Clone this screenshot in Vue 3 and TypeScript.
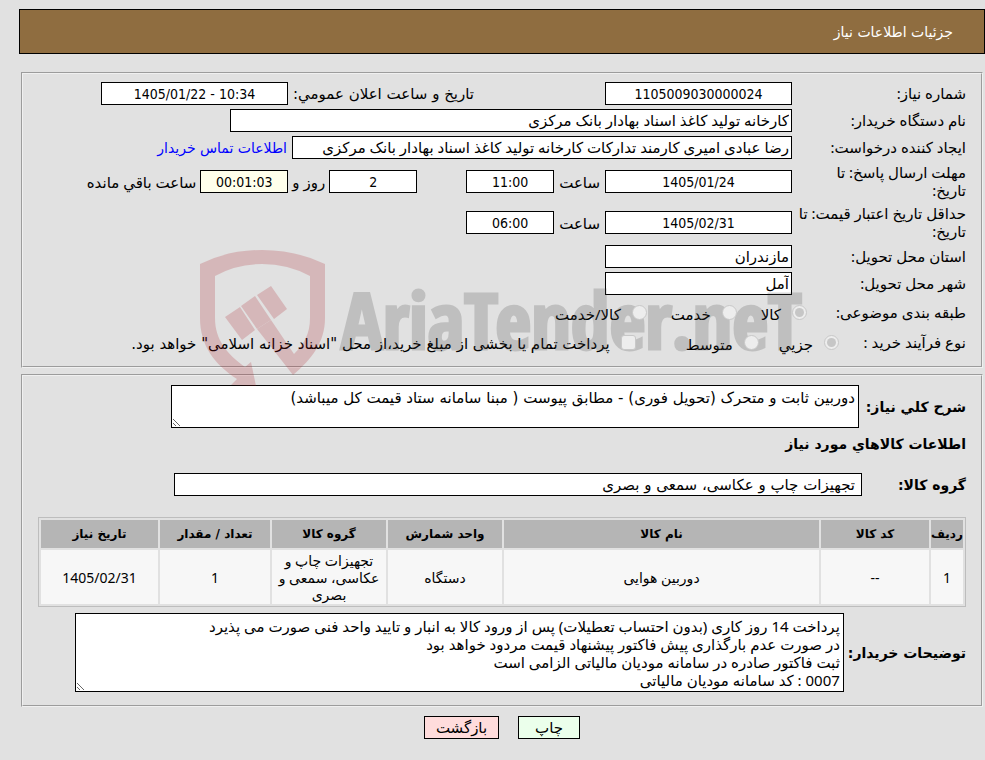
<script setup lang="ts">
interface Choice {
  id: string
  text: string
  checked: boolean
}

interface NeedItem {
  row: number
  code: string
  name: string
  unit: string
  group: string
  count: number
  date: string
}

const categories: Choice[] = [
  { id: 'cat-goods', text: 'کالا', checked: true },
  { id: 'cat-service', text: 'خدمت', checked: false },
  { id: 'cat-both', text: 'کالا/خدمت', checked: false },
]

const processes: Choice[] = [
  { id: 'proc-small', text: 'جزيي', checked: true },
  { id: 'proc-medium', text: 'متوسط', checked: false },
]

const items: NeedItem[] = [
  {
    row: 1,
    code: '--',
    name: 'دوربین هوایی',
    unit: 'دستگاه',
    group: 'تجهیزات چاپ و عکاسی، سمعی و بصری',
    count: 1,
    date: '1405/02/31',
  },
]

const summary = 'دوربین ثابت و متحرک (تحویل فوری) - مطابق پیوست ( مبنا سامانه ستاد قیمت کل میباشد)'

const notes = [
  'پرداخت 14 روز کاری (بدون احتساب تعطیلات) پس از ورود کالا به انبار و تایید واحد فنی صورت می پذیرد',
  'در صورت عدم بارگذاری پیش فاکتور پیشنهاد قیمت مردود خواهد بود',
  'ثبت فاکتور صادره در سامانه مودیان مالیاتی الزامی است',
  '0007 : کد سامانه مودیان مالیاتی',
].join('\n')
</script>

<template>
  <main class="page" dir="rtl">
    <header class="banner"><h1>جزئیات اطلاعات نیاز</h1></header>

    <fieldset class="panel details">
      <div class="row">
        <label class="lead" for="need-no">شماره نیاز:</label>
        <input id="need-no" class="w-date mid" value="1105009030000024" readonly />
        <label class="announce wide" for="announce">تاریخ و ساعت اعلان عمومي:</label>
        <input id="announce" class="w-date mid" dir="ltr" value="1405/01/22 - 10:34" readonly />
      </div>
      <div class="row">
        <label class="lead" for="buyer">نام دستگاه خریدار:</label>
        <input id="buyer" class="w-buyer" value="کارخانه تولید کاغذ اسناد بهادار بانک مرکزی" readonly />
      </div>
      <div class="row">
        <label class="lead" for="creator">ایجاد کننده درخواست:</label>
        <input id="creator" class="w-creator" value="رضا عبادی امیری کارمند تدارکات کارخانه تولید کاغذ اسناد بهادار بانک مرکزی" readonly />
        <a href="#contact">اطلاعات تماس خریدار</a>
      </div>
      <div class="row tall">
        <label class="lead" for="reply-date">مهلت ارسال پاسخ: تا<br />تاریخ:</label>
        <input id="reply-date" class="w-date mid" value="1405/01/24" readonly />
        <label for="reply-time">ساعت</label>
        <input id="reply-time" class="w-time mid" value="11:00" readonly />
        <span class="countdown">
          <input id="days-left" class="w-time mid" value="2" readonly />
          <label for="days-left">روز و</label>
          <input id="time-left" class="w-time mid remaining" value="00:01:03" readonly />
          <label for="time-left">ساعت باقي مانده</label>
        </span>
      </div>
      <div class="row tall">
        <label class="lead" for="price-date">حداقل تاریخ اعتبار قیمت: تا<br />تاریخ:</label>
        <input id="price-date" class="w-date mid" value="1405/02/31" readonly />
        <label for="price-time">ساعت</label>
        <input id="price-time" class="w-time mid" value="06:00" readonly />
      </div>
      <div class="row">
        <label class="lead" for="province">استان محل تحویل:</label>
        <input id="province" class="w-date" value="مازندران" readonly />
      </div>
      <div class="row">
        <label class="lead" for="city">شهر محل تحویل:</label>
        <input id="city" class="w-date" value="آمل" readonly />
      </div>
      <div class="choices" role="radiogroup" aria-labelledby="category-title">
        <span id="category-title" class="category-title">طبقه بندی موضوعی:</span>
        <span v-for="c in categories" :key="c.id" class="choice">
          <input :id="c.id" type="radio" name="category" :checked="c.checked" disabled />
          <label :for="c.id">{{ c.text }}</label>
        </span>
      </div>
      <div class="choices process" role="radiogroup" aria-labelledby="process-title">
        <span id="process-title" class="process-title">نوع فرآیند خرید :</span>
        <span v-for="p in processes" :key="p.id" class="choice">
          <input :id="p.id" type="radio" name="process" :checked="p.checked" disabled />
          <label :for="p.id">{{ p.text }}</label>
        </span>
        <span class="choice treasury">
          <input id="treasury" type="checkbox" disabled />
          <label class="wide" for="treasury">پرداخت تمام یا بخشی از مبلغ خرید،از محل "اسناد خزانه اسلامی" خواهد بود.</label>
        </span>
      </div>
    </fieldset>

    <fieldset class="panel goods">
      <div class="block">
        <label class="strong summary-label" for="summary">شرح کلي نیاز:</label>
        <textarea id="summary" class="summary wide" readonly :value="summary"></textarea>
      </div>
      <h2>اطلاعات کالاهاي مورد نیاز</h2>
      <div class="block">
        <label class="strong group-label" for="group">گروه کالا:</label>
        <input id="group" class="group-input wide" value="تجهیزات چاپ و عکاسی، سمعی و بصری" readonly />
      </div>
      <table>
        <colgroup>
          <col class="c-row" />
          <col class="c-code" />
          <col />
          <col class="c-unit" />
          <col class="c-unit" />
          <col class="c-count" />
          <col class="c-date" />
        </colgroup>
        <thead>
          <tr>
            <th>ردیف</th>
            <th>کد کالا</th>
            <th>نام کالا</th>
            <th>واحد شمارش</th>
            <th>گروه کالا</th>
            <th>تعداد / مقدار</th>
            <th>تاریخ نیاز</th>
          </tr>
        </thead>
        <tbody>
          <tr v-for="item in items" :key="item.row">
            <td>{{ item.row }}</td>
            <td>{{ item.code }}</td>
            <td>{{ item.name }}</td>
            <td>{{ item.unit }}</td>
            <td>{{ item.group }}</td>
            <td>{{ item.count }}</td>
            <td>{{ item.date }}</td>
          </tr>
        </tbody>
      </table>
      <div class="block">
        <label class="strong" for="notes">توضیحات خریدار:</label>
        <textarea id="notes" class="notes" readonly :value="notes"></textarea>
      </div>
    </fieldset>

    <div class="actions">
      <button type="button" class="print">چاپ</button>
      <button type="button" class="back">بازگشت</button>
    </div>

    <div class="watermark" dir="ltr" aria-hidden="true">
      <svg width="126" height="138" viewBox="0 0 126 138">
        <path
          fill-rule="evenodd"
          d="M0 14Q28 0 62 0T125 14V68C125 92 112 109 93 125L57 79 71 70 94 104C104 94 110 84 110 68V26Q88 14 62 14T15 26V68C15 90 27 104 45 117L51 112 56 136 31 135 37 129C14 114 0 95 0 68Z"
        />
        <path d="M40 57L55 80 42 90 25 67ZM55 46L71 70 57 79 41 56ZM71 36L87 59 74 69 57 45Z" />
      </svg>
      <span class="wordmark">AriaTender.neT</span>
    </div>
  </main>
</template>

<style>
body {
  background: #e1e1e1;
}
</style>

<style scoped>
.page {
  position: relative;
  box-sizing: border-box;
  padding: 9px 0 20px 19px;
  color: #000;
  font: 15px/18px 'Noto Sans', 'DejaVu Sans', sans-serif;
}
.page *,
.page *::before {
  box-sizing: border-box;
}
.banner {
  display: flex;
  align-items: center;
  height: 45px;
  padding: 0 31px;
  border: 1px solid #000;
  background: #8f6d40;
  color: #fff;
}
h1 {
  margin: 0;
  font-family: 'DejaVu Sans', sans-serif;
  font-size: 14px;
  font-weight: 400;
}
.panel {
  min-width: 0;
  margin: 18px 2px 0;
  padding: 6px 15px 9px;
  border: 2px groove #f0f0f0;
}
.goods {
  margin-top: 6px;
  padding-top: 9px;
  padding-bottom: 13px;
}
input,
textarea,
button {
  margin: 0;
  border: 1px solid #000;
  border-radius: 0;
  background: #fff;
  color: #000;
  font: inherit;
}
.wide {
  font-family: 'DejaVu Sans', sans-serif;
}
input {
  height: 23px;
  padding: 0 2px 2px;
}
.row {
  display: flex;
  align-items: center;
  gap: 5px;
  min-height: 27px;
}
.row.tall {
  min-height: 41px;
}
.row label,
.choice label {
  white-space: nowrap;
}
.lead {
  flex: none;
  width: 169px;
  padding-bottom: 2px;
}
.w-date {
  width: 187px;
}
.w-buyer {
  width: 562px;
}
.w-creator {
  width: 500px;
}
.w-time {
  width: 88px;
}
.mid {
  padding-bottom: 0;
  font-family: 'DejaVu Sans Condensed', 'DejaVu Sans', sans-serif;
  font-size: 14px;
  text-align: center;
}
.announce {
  margin-right: 126px;
}
.countdown {
  display: flex;
  align-items: center;
  gap: 4px;
  margin-right: 44px;
}
.remaining {
  background: #ffffeb;
}
a {
  color: #00f;
  font-family: 'DejaVu Sans', sans-serif;
  font-size: 14px;
  text-decoration: none;
}
.choices {
  display: flex;
  align-items: center;
  gap: 24px;
  min-height: 30px;
}
.category-title {
  width: 135px;
}
.process {
  gap: 20px;
}
.process-title {
  width: 107px;
}
.choice {
  display: flex;
  align-items: center;
  gap: 11px;
}
.treasury {
  margin-right: 30px;
}
.choice label {
  padding-top: 4px;
}
input[type='radio'],
input[type='checkbox'] {
  position: relative;
  z-index: 1;
  display: grid;
  place-items: center;
  flex: none;
  width: 15px;
  height: 15px;
  padding: 0;
  border: 1px solid #c8c8c8;
  border-radius: 50%;
  background: #ededed;
  appearance: none;
}
input[type='checkbox'] {
  border-radius: 3px;
}
input[type='radio']:checked::before {
  content: '';
  width: 9px;
  height: 9px;
  border-radius: 50%;
  background: #c6c6c6;
}
.block {
  display: flex;
  align-items: center;
  gap: 4px;
}
.strong,
h2 {
  flex: none;
  font-family: 'DejaVu Sans', sans-serif;
  font-size: 14px;
  font-weight: 700;
}
textarea {
  display: block;
  padding: 3px;
  resize: both;
  overflow: hidden;
}
.summary-label {
  width: 103px;
}
.summary {
  flex: 0 1 688px;
  height: 43px;
}
h2 {
  margin: 7px 0 20px;
}
.group-label {
  width: 100px;
}
.group-input {
  flex: 0 1 688px;
  padding: 0 6px;
}
table {
  width: 100%;
  margin: 21px 0 6px;
  border: 1px solid #bdbdbd;
  border-collapse: separate;
  border-spacing: 2px;
  table-layout: fixed;
  font-size: 14px;
  line-height: 17px;
  text-align: center;
}
th {
  height: 28px;
  padding: 0;
  background: #b5b5b5;
  font-family: 'DejaVu Sans', sans-serif;
  font-size: 12px;
  white-space: nowrap;
}
td {
  height: 54px;
  padding: 1px 2px;
  background: #f7f7f7;
}
.c-row {
  width: 32px;
}
.c-code {
  width: 108px;
}
.c-unit {
  width: 114px;
}
.c-count {
  width: 110px;
}
.c-date {
  width: 117px;
}
.notes {
  flex: 0 1 769px;
  height: 79px;
}
.actions {
  display: flex;
  justify-content: center;
  gap: 19px;
  margin-top: 9px;
}
button {
  height: 23px;
  padding: 0 0 2px;
}
.print {
  width: 62px;
  background: #ebffeb;
}
.back {
  width: 75px;
  background: #ffdcdc;
}
.watermark {
  position: absolute;
  top: 250px;
  left: 200px;
  display: flex;
  gap: 15px;
  opacity: 0.2;
  pointer-events: none;
}
.watermark svg {
  fill: #aa141e;
}
.wordmark {
  padding-top: 24px;
  color: #3c3c3c;
  font: 700 78px/90px 'Liberation Sans Narrow', 'Open Sans Condensed', 'Liberation Sans', sans-serif;
  white-space: nowrap;
  -webkit-text-stroke: 3px #3c3c3c;
}
</style>
